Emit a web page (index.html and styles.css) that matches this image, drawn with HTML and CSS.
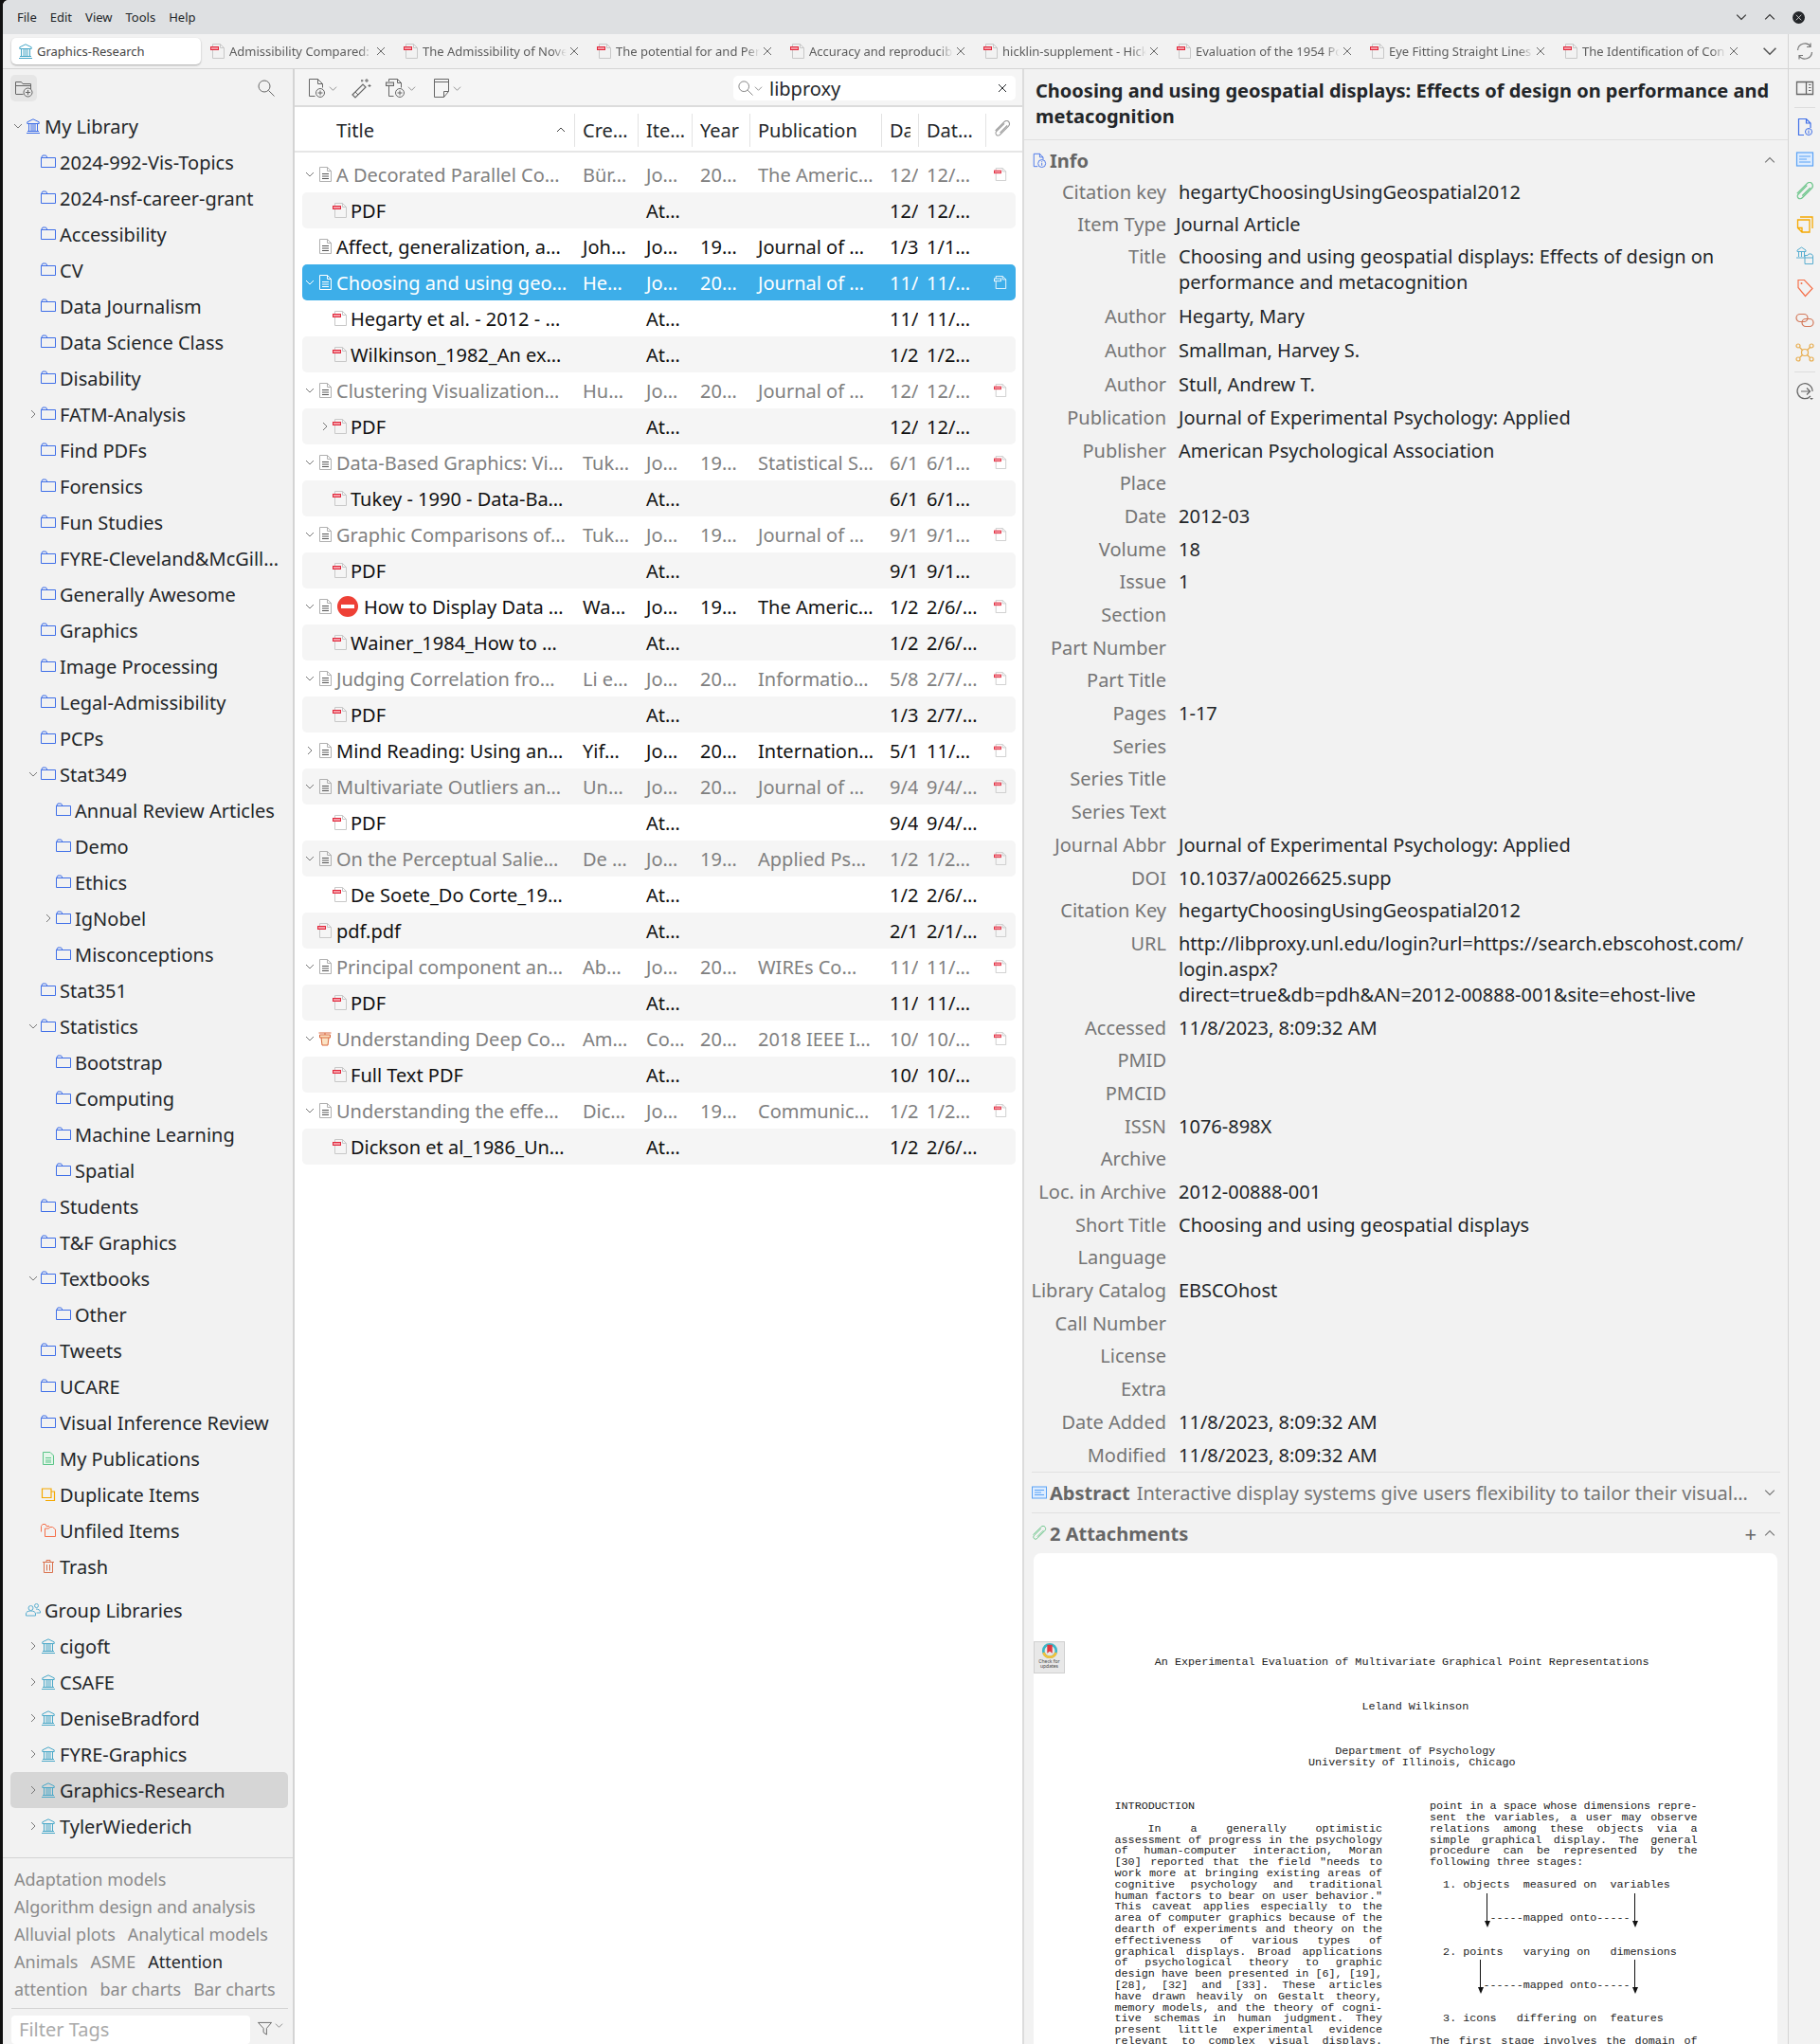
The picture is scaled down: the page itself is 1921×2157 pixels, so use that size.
FILE: index.html
```html
<!DOCTYPE html>
<html lang="en">
<head>
    <meta charset="UTF-8">
    <title>Graphics-Research - Zotero</title>
    <link rel="stylesheet" href="styles.css">
</head>
<body>
<svg class="defs" xmlns="http://www.w3.org/2000/svg">
    <symbol id="i-lib" viewBox="0 0 16 16"><path d="M1 15.500h14M2 13.500h12M2 5.500h12M8 .8 1.800 3.800v1.700h12.400V3.800zM3.500 6v7M6 6v7M8 6v7M10 6v7M12.500 6v7" fill="none" stroke="currentColor"/></symbol>
    <symbol id="i-folder" viewBox="0 0 16 14"><path d="M.5 3.500v10h15v-10H7L5.500 1H2L.5 3.500zM7 3.500H.5" fill="none" stroke="currentColor"/></symbol>
    <symbol id="i-down" viewBox="0 0 10 10"><path d="M1 3l4 4 4-4" fill="none" stroke="currentColor"/></symbol>
    <symbol id="i-right" viewBox="0 0 10 10"><path d="M3 1l4 4-4 4" fill="none" stroke="currentColor"/></symbol>
    <symbol id="i-up" viewBox="0 0 10 10"><path d="M1 7l4-4 4 4" fill="none" stroke="currentColor"/></symbol>
    <symbol id="i-doc" viewBox="0 0 16 16"><path d="M2.500.5h8l4 4v11h-12zM10.500.5v4h4" fill="none" stroke="currentColor"/><path d="M5 7.500h7M5 10h7M5 12.500h7" fill="none" stroke="var(--doc-line,#555)"/></symbol>
    <symbol id="i-pdf" viewBox="0 0 16 16"><path d="M2.500 .5h8l4 4v11h-12zM10.500 .5v4h4" fill="none" stroke="var(--pdf-page,#c8c8c8)"/><rect x=".5" y="3.500" width="8" height="3" fill="var(--pdf-fill,#f49aa4)" stroke="var(--pdf-stroke,#e2283c)"/></symbol>
    <symbol id="i-close" viewBox="0 0 10 10"><path d="M1 1l8 8M9 1l-8 8" fill="none" stroke="currentColor"/></symbol>
    <symbol id="i-search" viewBox="0 0 18 18"><circle cx="7" cy="7" r="6" fill="none" stroke="currentColor"/><path d="M11.500 11.500l6 6" fill="none" stroke="currentColor"/></symbol>
    <symbol id="i-clip" viewBox="1 1 16.500 16.500"><path d="M2.500 11 11 2.500c1.500-1.500 3.500-1.500 4.500 0s.8 3-.5 4.300l-8 8c-1 1-2.500 1.200-3.500.2s-.8-2.500.2-3.500l7.500-7.500M7 13l7-7" fill="none" stroke="currentColor"/></symbol>
</svg>

<div class="window">
    <div class="menubar">
        <nav class="menu"><span>File</span><span>Edit</span><span>View</span><span>Tools</span><span>Help</span></nav>
        <div class="win-buttons">
            <svg class="win-chev"><use href="#i-down"/></svg>
            <svg class="win-chev"><use href="#i-up"/></svg>
            <span class="win-close"><svg><use href="#i-close"/></svg></span>
        </div>
    </div>

    <div class="tabbar">
        <div class="tab-active"><svg class="ico16 teal"><use href="#i-lib"/></svg><span>Graphics-Research</span></div>
        <div class="tab"><svg class="ico16"><use href="#i-pdf"/></svg><span class="tab-name">Admissibility Compared:</span><svg class="tab-x"><use href="#i-close"/></svg></div>
        <div class="tab"><svg class="ico16"><use href="#i-pdf"/></svg><span class="tab-name">The Admissibility of Nove</span><svg class="tab-x"><use href="#i-close"/></svg></div>
        <div class="tab"><svg class="ico16"><use href="#i-pdf"/></svg><span class="tab-name">The potential for and Per</span><svg class="tab-x"><use href="#i-close"/></svg></div>
        <div class="tab"><svg class="ico16"><use href="#i-pdf"/></svg><span class="tab-name">Accuracy and reproducib</span><svg class="tab-x"><use href="#i-close"/></svg></div>
        <div class="tab"><svg class="ico16"><use href="#i-pdf"/></svg><span class="tab-name">hicklin-supplement - Hick</span><svg class="tab-x"><use href="#i-close"/></svg></div>
        <div class="tab"><svg class="ico16"><use href="#i-pdf"/></svg><span class="tab-name">Evaluation of the 1954 Po</span><svg class="tab-x"><use href="#i-close"/></svg></div>
        <div class="tab"><svg class="ico16"><use href="#i-pdf"/></svg><span class="tab-name">Eye Fitting Straight Lines</span><svg class="tab-x"><use href="#i-close"/></svg></div>
        <div class="tab"><svg class="ico16"><use href="#i-pdf"/></svg><span class="tab-name">The Identification of Con</span><svg class="tab-x"><use href="#i-close"/></svg></div>
        <svg class="tabs-more"><use href="#i-down"/></svg>
        <div class="tabbar-sync">
            <svg viewBox="0 0 20 20" width="20" height="20"><path d="M2.500 9A7.500 7.500 0 0 1 16 5M16 1.500V5.500H12M17.500 11A7.500 7.500 0 0 1 4 15M4 18.500V14.500H8" fill="none" stroke="#777" stroke-width="1.200"/></svg>
        </div>
    </div>

    <div class="panes">
        <aside class="sidebar">
            <div class="side-tools">
                <span class="new-coll">
                    <svg viewBox="0 0 20 20" width="20" height="20"><path d="M1.500 16V3.500h6l1.500 2h8.500v6M1.500 7.500h16M1.500 16.500h8" fill="none" stroke="#666"/><circle cx="14.500" cy="14.500" r="4.500" fill="#e6e6e6" stroke="#666"/><path d="M14.500 12v5M12 14.500h5" stroke="#666"/></svg>
                </span>
                <svg class="side-search"><use href="#i-search"/></svg>
            </div>

            <div class="tree">
                <div class="coll lv0"><svg class="twisty"><use href="#i-down"/></svg><svg class="ico16 blue"><use href="#i-lib"/></svg><span>My Library</span></div>
                <div class="coll lv1"><i class="twisty"></i><svg class="ico-f"><use href="#i-folder"/></svg><span>2024-992-Vis-Topics</span></div>
                <div class="coll lv1"><i class="twisty"></i><svg class="ico-f"><use href="#i-folder"/></svg><span>2024-nsf-career-grant</span></div>
                <div class="coll lv1"><i class="twisty"></i><svg class="ico-f"><use href="#i-folder"/></svg><span>Accessibility</span></div>
                <div class="coll lv1"><i class="twisty"></i><svg class="ico-f"><use href="#i-folder"/></svg><span>CV</span></div>
                <div class="coll lv1"><i class="twisty"></i><svg class="ico-f"><use href="#i-folder"/></svg><span>Data Journalism</span></div>
                <div class="coll lv1"><i class="twisty"></i><svg class="ico-f"><use href="#i-folder"/></svg><span>Data Science Class</span></div>
                <div class="coll lv1"><i class="twisty"></i><svg class="ico-f"><use href="#i-folder"/></svg><span>Disability</span></div>
                <div class="coll lv1"><svg class="twisty"><use href="#i-right"/></svg><svg class="ico-f"><use href="#i-folder"/></svg><span>FATM-Analysis</span></div>
                <div class="coll lv1"><i class="twisty"></i><svg class="ico-f"><use href="#i-folder"/></svg><span>Find PDFs</span></div>
                <div class="coll lv1"><i class="twisty"></i><svg class="ico-f"><use href="#i-folder"/></svg><span>Forensics</span></div>
                <div class="coll lv1"><i class="twisty"></i><svg class="ico-f"><use href="#i-folder"/></svg><span>Fun Studies</span></div>
                <div class="coll lv1"><i class="twisty"></i><svg class="ico-f"><use href="#i-folder"/></svg><span>FYRE-Cleveland&amp;McGill…</span></div>
                <div class="coll lv1"><i class="twisty"></i><svg class="ico-f"><use href="#i-folder"/></svg><span>Generally Awesome</span></div>
                <div class="coll lv1"><i class="twisty"></i><svg class="ico-f"><use href="#i-folder"/></svg><span>Graphics</span></div>
                <div class="coll lv1"><i class="twisty"></i><svg class="ico-f"><use href="#i-folder"/></svg><span>Image Processing</span></div>
                <div class="coll lv1"><i class="twisty"></i><svg class="ico-f"><use href="#i-folder"/></svg><span>Legal-Admissibility</span></div>
                <div class="coll lv1"><i class="twisty"></i><svg class="ico-f"><use href="#i-folder"/></svg><span>PCPs</span></div>
                <div class="coll lv1"><svg class="twisty"><use href="#i-down"/></svg><svg class="ico-f"><use href="#i-folder"/></svg><span>Stat349</span></div>
                <div class="coll lv2"><i class="twisty"></i><svg class="ico-f"><use href="#i-folder"/></svg><span>Annual Review Articles</span></div>
                <div class="coll lv2"><i class="twisty"></i><svg class="ico-f"><use href="#i-folder"/></svg><span>Demo</span></div>
                <div class="coll lv2"><i class="twisty"></i><svg class="ico-f"><use href="#i-folder"/></svg><span>Ethics</span></div>
                <div class="coll lv2"><svg class="twisty"><use href="#i-right"/></svg><svg class="ico-f"><use href="#i-folder"/></svg><span>IgNobel</span></div>
                <div class="coll lv2"><i class="twisty"></i><svg class="ico-f"><use href="#i-folder"/></svg><span>Misconceptions</span></div>
                <div class="coll lv1"><i class="twisty"></i><svg class="ico-f"><use href="#i-folder"/></svg><span>Stat351</span></div>
                <div class="coll lv1"><svg class="twisty"><use href="#i-down"/></svg><svg class="ico-f"><use href="#i-folder"/></svg><span>Statistics</span></div>
                <div class="coll lv2"><i class="twisty"></i><svg class="ico-f"><use href="#i-folder"/></svg><span>Bootstrap</span></div>
                <div class="coll lv2"><i class="twisty"></i><svg class="ico-f"><use href="#i-folder"/></svg><span>Computing</span></div>
                <div class="coll lv2"><i class="twisty"></i><svg class="ico-f"><use href="#i-folder"/></svg><span>Machine Learning</span></div>
                <div class="coll lv2"><i class="twisty"></i><svg class="ico-f"><use href="#i-folder"/></svg><span>Spatial</span></div>
                <div class="coll lv1"><i class="twisty"></i><svg class="ico-f"><use href="#i-folder"/></svg><span>Students</span></div>
                <div class="coll lv1"><i class="twisty"></i><svg class="ico-f"><use href="#i-folder"/></svg><span>T&amp;F Graphics</span></div>
                <div class="coll lv1"><svg class="twisty"><use href="#i-down"/></svg><svg class="ico-f"><use href="#i-folder"/></svg><span>Textbooks</span></div>
                <div class="coll lv2"><i class="twisty"></i><svg class="ico-f"><use href="#i-folder"/></svg><span>Other</span></div>
                <div class="coll lv1"><i class="twisty"></i><svg class="ico-f"><use href="#i-folder"/></svg><span>Tweets</span></div>
                <div class="coll lv1"><i class="twisty"></i><svg class="ico-f"><use href="#i-folder"/></svg><span>UCARE</span></div>
                <div class="coll lv1"><i class="twisty"></i><svg class="ico-f"><use href="#i-folder"/></svg><span>Visual Inference Review</span></div>
                <div class="coll lv1"><i class="twisty"></i>
                    <svg class="ico16" viewBox="0 0 16 16"><path d="M2.500 1.500h7.500l3.500 3.500v9.500h-11z" fill="#e4f6ea" stroke="#59c487"/><path d="M5 7.500h6M5 10h6M5 12h6" stroke="#59c487"/></svg>
                    <span>My Publications</span></div>
                <div class="coll lv1"><i class="twisty"></i>
                    <svg class="ico16" viewBox="0 0 16 16"><path d="M1.500 2h9.500v9.500H1.500zM5 14.500h9.500V5h-3.500" fill="none" stroke="#f5a800" stroke-width="1.200"/></svg>
                    <span>Duplicate Items</span></div>
                <div class="coll lv1"><i class="twisty"></i>
                    <svg class="ico16" viewBox="0 0 16 16"><path d="M.5 9.500V3.500L2 1.500h3l1 2h3M4.500 14.500V6h4l1-1.500h3L15.500 7v7.500z" fill="none" stroke="#f5704a"/></svg>
                    <span>Unfiled Items</span></div>
                <div class="coll lv1"><i class="twisty"></i>
                    <svg class="ico16" viewBox="0 0 16 16"><path d="M2 3.500h12M6 3V1.500h4V3M3.500 4v10.500h9V4M6.500 6v6.500M9.500 6v6.500" fill="none" stroke="#d9714d"/></svg>
                    <span>Trash</span></div>

                <div class="coll lv0 group-head"><i class="twisty"></i>
                    <svg class="ico16" viewBox="0 0 16 16"><circle cx="5.500" cy="6" r="2.500" fill="none" stroke="#5aaed0"/><circle cx="11.500" cy="3.500" r="2" fill="none" stroke="#5aaed0"/><path d="M.5 14v-2c0-2 2-3 5-3s5 1 5 3v2zM11 7c2 0 4.500 1 4.500 3v1h-4" fill="none" stroke="#5aaed0"/></svg>
                    <span>Group Libraries</span></div>
                <div class="coll lv1"><svg class="twisty"><use href="#i-right"/></svg><svg class="ico16 teal"><use href="#i-lib"/></svg><span>cigoft</span></div>
                <div class="coll lv1"><svg class="twisty"><use href="#i-right"/></svg><svg class="ico16 teal"><use href="#i-lib"/></svg><span>CSAFE</span></div>
                <div class="coll lv1"><svg class="twisty"><use href="#i-right"/></svg><svg class="ico16 teal"><use href="#i-lib"/></svg><span>DeniseBradford</span></div>
                <div class="coll lv1"><svg class="twisty"><use href="#i-right"/></svg><svg class="ico16 teal"><use href="#i-lib"/></svg><span>FYRE-Graphics</span></div>
                <div class="coll lv1 coll-selected"><svg class="twisty"><use href="#i-right"/></svg><svg class="ico16 teal"><use href="#i-lib"/></svg><span>Graphics-Research</span></div>
                <div class="coll lv1"><svg class="twisty"><use href="#i-right"/></svg><svg class="ico16 teal"><use href="#i-lib"/></svg><span>TylerWiederich</span></div>
            </div>

            <div class="tags">
                <div class="tag-list">
                    <div class="tag-line"><span>Adaptation models</span></div>
                    <div class="tag-line"><span>Algorithm design and analysis</span></div>
                    <div class="tag-line"><span>Alluvial plots</span><span>Analytical models</span></div>
                    <div class="tag-line"><span>Animals</span><span>ASME</span><span class="tag-on">Attention</span></div>
                    <div class="tag-line"><span>attention</span><span>bar charts</span><span>Bar charts</span></div>
                    <div class="tag-line"><span>Barplots</span><span>Base Plots</span></div>
                </div>
                <div class="tag-filter">
                    <span class="tag-input">Filter Tags</span>
                    <svg viewBox="0 0 16 16" width="15" height="15"><path d="M.5 1.500h15L10 8v7L6.500 12.500V8z" fill="none" stroke="#666"/></svg>
                    <svg class="chev-s"><use href="#i-down"/></svg>
                </div>
            </div>
        </aside>

        <main class="items">
            <div class="items-tools">
                <svg class="tool" viewBox="0 0 22 22"><path d="M2.500 19.500V1.500h9l5 5v4M11.500 1.500v5h5M2.500 19.500h6" fill="none" stroke="#666"/><circle cx="14" cy="16" r="4.500" fill="none" stroke="#666"/><path d="M14 13.500v5M11.500 16h5" stroke="#666"/></svg>
                <svg class="chev-s"><use href="#i-down"/></svg>
                <svg class="tool wand" viewBox="0 0 22 22"><path d="M2 18l11-11 3 3L5 21z" fill="none" stroke="#666" stroke-width="1.200"/><path d="M5 15l3 3" stroke="#666"/><path d="M17 1v4M15 3h4M20 7v3M18.500 8.500h3M12 2v2.500M11 3h2.500" stroke="#666"/></svg>
                <svg class="tool" viewBox="0 0 22 22"><path d="M3.500 4V1.500h9l4 4v5M12.500 1.500v4h4M3.500 9v10.500h5" fill="none" stroke="#666"/><rect x=".5" y="5" width="8" height="3.500" fill="#ddd" stroke="#666"/><circle cx="15" cy="16" r="4.500" fill="none" stroke="#666"/><path d="M15 13.500v5M12.500 16h5" stroke="#666"/></svg>
                <svg class="chev-s"><use href="#i-down"/></svg>
                <svg class="tool note" viewBox="0 0 22 22"><path d="M3.500 1.500h15v13l-5 6h-10zM18.500 14.500h-5v6M3.500 4.500h15" fill="none" stroke="#666"/></svg>
                <svg class="chev-s"><use href="#i-down"/></svg>
                <div class="search-box">
                    <svg class="search-mag"><use href="#i-search"/></svg>
                    <svg class="chev-s"><use href="#i-down"/></svg>
                    <span class="search-text">libproxy</span>
                    <svg class="search-x"><use href="#i-close"/></svg>
                </div>
            </div>

            <div class="col-head">
                <div class="c-title">Title<svg class="sort"><use href="#i-up"/></svg></div>
                <div>Cre…</div><div>Ite…</div><div>Year</div><div>Publication</div><div><span class="da-head">Da</span></div><div>Dat…</div>
                <div class="c-clip"><svg><use href="#i-clip"/></svg></div>
            </div>

            <div class="rows">
                <div class="row dim"><div class="c-name"><svg class="twisty"><use href="#i-down"/></svg><svg class="ico16 doc"><use href="#i-doc"/></svg><b>A Decorated Parallel Co…</b></div><span>Bür…</span><span>Jo…</span><span>20…</span><span>The Americ…</span><span>12/</span><span>12/…</span><span class="c-att"><svg><use href="#i-pdf"/></svg></span></div>
                <div class="row"><div class="c-name child"><i class="twisty"></i><svg class="ico16"><use href="#i-pdf"/></svg><b>PDF</b></div><span></span><span>At…</span><span></span><span></span><span>12/</span><span>12/…</span></div>
                <div class="row"><div class="c-name"><i class="twisty"></i><svg class="ico16 doc"><use href="#i-doc"/></svg><b>Affect, generalization, a…</b></div><span>Joh…</span><span>Jo…</span><span>19…</span><span>Journal of …</span><span>1/3</span><span>1/1…</span></div>
                <div class="row selected"><div class="c-name"><svg class="twisty"><use href="#i-down"/></svg><svg class="ico16 doc"><use href="#i-doc"/></svg><b>Choosing and using geo…</b></div><span>He…</span><span>Jo…</span><span>20…</span><span>Journal of …</span><span>11/</span><span>11/…</span><span class="c-att"><svg><use href="#i-pdf"/></svg></span></div>
                <div class="row"><div class="c-name child"><i class="twisty"></i><svg class="ico16"><use href="#i-pdf"/></svg><b>Hegarty et al. - 2012 - …</b></div><span></span><span>At…</span><span></span><span></span><span>11/</span><span>11/…</span></div>
                <div class="row"><div class="c-name child"><i class="twisty"></i><svg class="ico16"><use href="#i-pdf"/></svg><b>Wilkinson_1982_An ex…</b></div><span></span><span>At…</span><span></span><span></span><span>1/2</span><span>1/2…</span></div>
                <div class="row dim"><div class="c-name"><svg class="twisty"><use href="#i-down"/></svg><svg class="ico16 doc"><use href="#i-doc"/></svg><b>Clustering Visualization…</b></div><span>Hu…</span><span>Jo…</span><span>20…</span><span>Journal of …</span><span>12/</span><span>12/…</span><span class="c-att"><svg><use href="#i-pdf"/></svg></span></div>
                <div class="row"><div class="c-name child"><svg class="twisty"><use href="#i-right"/></svg><svg class="ico16"><use href="#i-pdf"/></svg><b>PDF</b></div><span></span><span>At…</span><span></span><span></span><span>12/</span><span>12/…</span></div>
                <div class="row dim"><div class="c-name"><svg class="twisty"><use href="#i-down"/></svg><svg class="ico16 doc"><use href="#i-doc"/></svg><b>Data-Based Graphics: Vi…</b></div><span>Tuk…</span><span>Jo…</span><span>19…</span><span>Statistical S…</span><span>6/1</span><span>6/1…</span><span class="c-att"><svg><use href="#i-pdf"/></svg></span></div>
                <div class="row"><div class="c-name child"><i class="twisty"></i><svg class="ico16"><use href="#i-pdf"/></svg><b>Tukey - 1990 - Data-Ba…</b></div><span></span><span>At…</span><span></span><span></span><span>6/1</span><span>6/1…</span></div>
                <div class="row dim"><div class="c-name"><svg class="twisty"><use href="#i-down"/></svg><svg class="ico16 doc"><use href="#i-doc"/></svg><b>Graphic Comparisons of…</b></div><span>Tuk…</span><span>Jo…</span><span>19…</span><span>Journal of …</span><span>9/1</span><span>9/1…</span><span class="c-att"><svg><use href="#i-pdf"/></svg></span></div>
                <div class="row"><div class="c-name child"><i class="twisty"></i><svg class="ico16"><use href="#i-pdf"/></svg><b>PDF</b></div><span></span><span>At…</span><span></span><span></span><span>9/1</span><span>9/1…</span></div>
                <div class="row"><div class="c-name"><svg class="twisty"><use href="#i-down"/></svg><svg class="ico16 doc"><use href="#i-doc"/></svg><svg class="stop" viewBox="0 0 22 22"><circle cx="11" cy="11" r="11" fill="#ee4036"/><rect x="4" y="9" width="14" height="4" fill="#fff"/></svg><b>How to Display Data …</b></div><span>Wa…</span><span>Jo…</span><span>19…</span><span>The Americ…</span><span>1/2</span><span>2/6/…</span><span class="c-att"><svg><use href="#i-pdf"/></svg></span></div>
                <div class="row"><div class="c-name child"><i class="twisty"></i><svg class="ico16"><use href="#i-pdf"/></svg><b>Wainer_1984_How to …</b></div><span></span><span>At…</span><span></span><span></span><span>1/2</span><span>2/6/…</span></div>
                <div class="row dim"><div class="c-name"><svg class="twisty"><use href="#i-down"/></svg><svg class="ico16 doc"><use href="#i-doc"/></svg><b>Judging Correlation fro…</b></div><span>Li e…</span><span>Jo…</span><span>20…</span><span>Informatio…</span><span>5/8</span><span>2/7/…</span><span class="c-att"><svg><use href="#i-pdf"/></svg></span></div>
                <div class="row"><div class="c-name child"><i class="twisty"></i><svg class="ico16"><use href="#i-pdf"/></svg><b>PDF</b></div><span></span><span>At…</span><span></span><span></span><span>1/3</span><span>2/7/…</span></div>
                <div class="row"><div class="c-name"><svg class="twisty"><use href="#i-right"/></svg><svg class="ico16 doc"><use href="#i-doc"/></svg><b>Mind Reading: Using an…</b></div><span>Yif…</span><span>Jo…</span><span>20…</span><span>Internation…</span><span>5/1</span><span>11/…</span><span class="c-att"><svg><use href="#i-pdf"/></svg></span></div>
                <div class="row dim"><div class="c-name"><svg class="twisty"><use href="#i-down"/></svg><svg class="ico16 doc"><use href="#i-doc"/></svg><b>Multivariate Outliers an…</b></div><span>Un…</span><span>Jo…</span><span>20…</span><span>Journal of …</span><span>9/4</span><span>9/4/…</span><span class="c-att"><svg><use href="#i-pdf"/></svg></span></div>
                <div class="row"><div class="c-name child"><i class="twisty"></i><svg class="ico16"><use href="#i-pdf"/></svg><b>PDF</b></div><span></span><span>At…</span><span></span><span></span><span>9/4</span><span>9/4/…</span></div>
                <div class="row dim"><div class="c-name"><svg class="twisty"><use href="#i-down"/></svg><svg class="ico16 doc"><use href="#i-doc"/></svg><b>On the Perceptual Salie…</b></div><span>De …</span><span>Jo…</span><span>19…</span><span>Applied Ps…</span><span>1/2</span><span>1/2…</span><span class="c-att"><svg><use href="#i-pdf"/></svg></span></div>
                <div class="row"><div class="c-name child"><i class="twisty"></i><svg class="ico16"><use href="#i-pdf"/></svg><b>De Soete_Do Corte_19…</b></div><span></span><span>At…</span><span></span><span></span><span>1/2</span><span>2/6/…</span></div>
                <div class="row"><div class="c-name"><i class="twisty"></i><svg class="ico16"><use href="#i-pdf"/></svg><b>pdf.pdf</b></div><span></span><span>At…</span><span></span><span></span><span>2/1</span><span>2/1/…</span><span class="c-att"><svg><use href="#i-pdf"/></svg></span></div>
                <div class="row dim"><div class="c-name"><svg class="twisty"><use href="#i-down"/></svg><svg class="ico16 doc"><use href="#i-doc"/></svg><b>Principal component an…</b></div><span>Ab…</span><span>Jo…</span><span>20…</span><span>WIREs Co…</span><span>11/</span><span>11/…</span><span class="c-att"><svg><use href="#i-pdf"/></svg></span></div>
                <div class="row"><div class="c-name child"><i class="twisty"></i><svg class="ico16"><use href="#i-pdf"/></svg><b>PDF</b></div><span></span><span>At…</span><span></span><span></span><span>11/</span><span>11/…</span></div>
                <div class="row dim"><div class="c-name"><svg class="twisty"><use href="#i-down"/></svg><svg class="ico16" viewBox="0 0 16 16"><path d="M1.500 2h13M8 2v2M2.500 4h11v3h-11zM4 7l1 8h6l1-8" fill="#fbe3c4" stroke="#d9663a"/></svg><b>Understanding Deep Co…</b></div><span>Am…</span><span>Co…</span><span>20…</span><span>2018 IEEE I…</span><span>10/</span><span>10/…</span><span class="c-att"><svg><use href="#i-pdf"/></svg></span></div>
                <div class="row"><div class="c-name child"><i class="twisty"></i><svg class="ico16"><use href="#i-pdf"/></svg><b>Full Text PDF</b></div><span></span><span>At…</span><span></span><span></span><span>10/</span><span>10/…</span></div>
                <div class="row dim"><div class="c-name"><svg class="twisty"><use href="#i-down"/></svg><svg class="ico16 doc"><use href="#i-doc"/></svg><b>Understanding the effe…</b></div><span>Dic…</span><span>Jo…</span><span>19…</span><span>Communic…</span><span>1/2</span><span>1/2…</span><span class="c-att"><svg><use href="#i-pdf"/></svg></span></div>
                <div class="row"><div class="c-name child"><i class="twisty"></i><svg class="ico16"><use href="#i-pdf"/></svg><b>Dickson et al_1986_Un…</b></div><span></span><span>At…</span><span></span><span></span><span>1/2</span><span>2/6/…</span></div>
            </div>
        </main>

        <section class="details">
            <h1 class="item-title">Choosing and using geospatial displays: Effects of design on performance and metacognition</h1>

            <div class="sec-head info-head">
                <svg class="sec-ico" viewBox="0 0 16 18"><path d="M6 16.500H1.500V1.500h7l4 4v3M8.500 1.500v4h4" fill="none" stroke="#3f6fe8"/><circle cx="11" cy="13" r="4.500" fill="#f2f2f2" stroke="#3f6fe8"/><path d="M11 12v3.500M11 10v1" stroke="#3f6fe8"/></svg>
                <strong>Info</strong>
                <svg class="sec-chev"><use href="#i-up"/></svg>
            </div>

            <div class="fields">
                <label>Citation key</label><div>hegartyChoosingUsingGeospatial2012</div>
                <label>Item Type</label><div class="type-val">Journal Article</div>
                <label>Title</label><div>Choosing and using geospatial displays: Effects of design on<br>performance and metacognition</div>
                <label class="creator">Author</label><div class="creator">Hegarty, Mary</div>
                <label class="creator">Author</label><div class="creator">Smallman, Harvey S.</div>
                <label class="creator">Author</label><div class="creator">Stull, Andrew T.</div>
                <label>Publication</label><div>Journal of Experimental Psychology: Applied</div>
                <label>Publisher</label><div>American Psychological Association</div>
                <label>Place</label><div></div>
                <label>Date</label><div>2012-03</div>
                <label>Volume</label><div>18</div>
                <label>Issue</label><div>1</div>
                <label>Section</label><div></div>
                <label>Part Number</label><div></div>
                <label>Part Title</label><div></div>
                <label>Pages</label><div>1-17</div>
                <label>Series</label><div></div>
                <label>Series Title</label><div></div>
                <label>Series Text</label><div></div>
                <label>Journal Abbr</label><div>Journal of Experimental Psychology: Applied</div>
                <label>DOI</label><div>10.1037/a0026625.supp</div>
                <label>Citation Key</label><div>hegartyChoosingUsingGeospatial2012</div>
                <label>URL</label><div>http://libproxy.unl.edu/login?url=https://search.ebscohost.com/<br>login.aspx?<br>direct=true&amp;db=pdh&amp;AN=2012-00888-001&amp;site=ehost-live</div>
                <label>Accessed</label><div>11/8/2023, 8:09:32 AM</div>
                <label>PMID</label><div></div>
                <label>PMCID</label><div></div>
                <label>ISSN</label><div>1076-898X</div>
                <label>Archive</label><div></div>
                <label>Loc. in Archive</label><div>2012-00888-001</div>
                <label>Short Title</label><div>Choosing and using geospatial displays</div>
                <label>Language</label><div></div>
                <label>Library Catalog</label><div>EBSCOhost</div>
                <label>Call Number</label><div></div>
                <label>License</label><div></div>
                <label>Extra</label><div></div>
                <label>Date Added</label><div>11/8/2023, 8:09:32 AM</div>
                <label>Modified</label><div>11/8/2023, 8:09:32 AM</div>
            </div>

            <div class="sec-head abstract-head">
                <svg class="sec-ico" viewBox="0 0 16 14"><rect x=".5" y="1" width="15" height="12" fill="#dcecff" stroke="#5aa2f5"/><path d="M3 4.500h10M3 7h7M3 9.500h10" stroke="#5aa2f5"/></svg>
                <strong>Abstract</strong>
                <span class="abstract-text">Interactive display systems give users flexibility to tailor their visual…</span>
                <svg class="sec-chev"><use href="#i-down"/></svg>
            </div>

            <div class="sec-head attach-head">
                <svg class="sec-ico"><use href="#i-clip"/></svg>
                <strong>2 Attachments</strong>
                <span class="attach-add">+</span>
                <svg class="sec-chev"><use href="#i-up"/></svg>
            </div>

            <div class="preview">
                <div class="crossmark">
                    <svg viewBox="0 0 20 20" width="18" height="18"><circle cx="10" cy="10" r="7.500" fill="none" stroke="#3cb6c8" stroke-width="3"/><path d="M2.800 12a7.500 7.500 0 0 0 14.400 0" fill="none" stroke="#f3c13a" stroke-width="3"/><path d="M7 3h6v10l-3-2.500L7 13z" fill="#e2343c"/></svg>
                    <span>Check for updates</span>
                </div>
                <pre class="pdf-head">      An Experimental Evaluation of Multivariate Graphical Point Representations



                                     Leland Wilkinson



                                 Department of Psychology
                             University of Illinois, Chicago



</pre>
                <div class="pdf-cols">
                    <div class="pdf-col">
                        <p class="plain">INTRODUCTION</p>
                        <p class="plain">&nbsp;</p>
                        <p class="indent">In a generally optimistic</p>
                        <p>assessment of progress in the psychology</p>
                        <p>of human-computer interaction, Moran</p>
                        <p>[30] reported that the field "needs to</p>
                        <p>work more at bringing existing areas of</p>
                        <p>cognitive psychology and traditional</p>
                        <p>human factors to bear on user behavior."</p>
                        <p>This caveat applies especially to the</p>
                        <p>area of computer graphics because of the</p>
                        <p>dearth of experiments and theory on the</p>
                        <p>effectiveness of various types of</p>
                        <p>graphical displays. Broad applications</p>
                        <p>of psychological theory to graphic</p>
                        <p>design have been presented in [6], [19],</p>
                        <p>[28], [32] and [33]. These articles</p>
                        <p>have drawn heavily on Gestalt theory,</p>
                        <p>memory models, and the theory of cogni-</p>
                        <p>tive schemas in human judgment. They</p>
                        <p>present little experimental evidence</p>
                        <p>relevant to complex visual displays.</p>
                    </div>
                    <div class="pdf-col">
                        <p>point in a space whose dimensions repre-</p>
                        <p>sent the variables, a user may observe</p>
                        <p>relations among these objects via a</p>
                        <p>simple graphical display. The general</p>
                        <p>procedure can be represented by the</p>
                        <p class="plain">following three stages:</p>
                        <p class="plain">&nbsp;</p>
                        <pre>  1. objects  measured on  variables</pre>
                        <div class="mapped">
                            <i class="arrow a1"></i><i class="arrow a3"></i>
                            <pre>


         -----mapped onto-----


</pre>
                        </div>
                        <pre>  2. points   varying on   dimensions</pre>
                        <div class="mapped">
                            <i class="arrow a2"></i><i class="arrow a3"></i>
                            <pre>


        ------mapped onto-----


</pre>
                        </div>
                        <pre>  3. icons   differing on  features</pre>
                        <p class="plain">&nbsp;</p>
                        <p>The first stage involves the domain of</p>
                    </div>
                </div>
            </div>
        </section>

        <nav class="side-tabs">
            <svg class="st" viewBox="0 0 20 20"><path d="M1.500 3.500h17v13h-17zM11.500 3.500v13" fill="none" stroke="#666" stroke-width="1.300"/><path d="M14 6.500h2.500M14 9.500h2.500M14 12.500h2.500" stroke="#666"/></svg>
            <hr>
            <svg class="st" viewBox="0 0 20 20"><path d="M9 18.500H3.500V1.500h8l4.500 4.500v5M11.500 1.500V6H16" fill="none" stroke="#3f6fe8" stroke-width="1.200"/><circle cx="14" cy="15" r="3.500" fill="#f2f2f2" stroke="#3f6fe8"/><path d="M14 14v3M14 12.500v1" stroke="#3f6fe8"/></svg>
            <svg class="st" viewBox="0 0 20 20"><rect x="1.500" y="3" width="17" height="14" fill="#dcecff" stroke="#5aa2f5" stroke-width="1.200"/><path d="M4 7h12M4 10h8M4 13h12" stroke="#5aa2f5"/></svg>
            <svg class="st green"><use href="#i-clip"/></svg>
            <svg class="st" viewBox="0 0 20 20"><path d="M5 3h13v12M2.500 6h12.500v13H7l-4.500-4.500zM2.500 14.500H7V19" fill="none" stroke="#f5a800" stroke-width="1.300"/></svg>
            <svg class="st" viewBox="0 0 20 20"><path d="M1 12h9M2 5.500h9M6.500 1 2 4v1.500h9V4zM3.500 6v5M6.500 6v5M9.500 6v5" fill="none" stroke="#5aaed0"/><path d="M10 18.500v-9h3l1-1.500h3l1.500 2v8.500zM10 12h9" fill="none" stroke="#5aaed0"/></svg>
            <svg class="st" viewBox="0 0 20 20"><path d="M3 1.500h6.500l8.500 9-7.500 8L3 9.500z" fill="none" stroke="#f5704a" stroke-width="1.200"/><circle cx="6.500" cy="5" r="1" fill="#f5704a"/></svg>
            <svg class="st" viewBox="0 0 20 20"><g fill="none" stroke="#d4795a" stroke-width="1.200"><rect x="1" y="3.500" width="12" height="8" rx="4"/><rect x="7" y="8.500" width="12" height="8" rx="4"/></g></svg>
            <svg class="st" viewBox="0 0 20 20"><g fill="none" stroke="#e8ad4f" stroke-width="1.200"><circle cx="10" cy="10" r="3.500"/><circle cx="3" cy="3" r="2"/><circle cx="17" cy="3" r="2"/><circle cx="3" cy="17" r="2"/><circle cx="17" cy="17" r="2"/><path d="M4.500 4.500l3 3M15.500 4.500l-3 3M4.500 15.500l3-3M15.500 15.500l-3-3"/></g></svg>
            <hr>
            <svg class="st" viewBox="0 0 20 20"><path d="M16 15A8 8 0 1 1 18 10M6 10h9M12 6.500l3.500 3.500-3.500 3.500" fill="none" stroke="#666" stroke-width="1.200"/><path d="M15 17h4l-2 2z" fill="#666"/></svg>
        </nav>
    </div>
</div>
</body>
</html>
```

FILE: styles.css
```css
* { box-sizing: border-box; }

html, body {
    height: 100%;
    margin: 0;
    overflow: hidden;
    background-color: #111;
    font-family: "Noto Sans", sans-serif;
    font-size: 20px;
    color: #232629;
}

.defs { display: none; }

.window {
    margin-left: 3px;
    height: 2157px;
    display: flex;
    flex-direction: column;
    background-color: #f2f2f2;
    border-top-left-radius: 6px;
    overflow: hidden;
}

/* top bars */
.menubar {
    height: 36px;
    flex: none;
    display: flex;
    justify-content: space-between;
    align-items: center;
    background-color: #dee0e2;
    padding: 0 16px 0 15px;
    font-size: 13px;
}
.menu { display: flex; gap: 14px; }
.win-buttons { display: flex; align-items: center; gap: 18px; }
.win-chev { width: 12px; height: 12px; color: #333; }
.win-close {
    width: 13px;
    height: 13px;
    border-radius: 50%;
    background-color: #232629;
    color: #fff;
    display: flex;
    align-items: center;
    justify-content: center;
}
.win-close svg { width: 7px; height: 7px; }

.tabbar {
    height: 37px;
    flex: none;
    display: flex;
    align-items: center;
    border-bottom: 1px solid #d4d4d4;
    padding-left: 9px;
    font-size: 13px;
    color: #5c5c5c;
}
.tab-active {
    width: 200px;
    height: 28px;
    margin-right: 6px;
    display: flex;
    align-items: center;
    gap: 4px;
    padding-left: 7px;
    background-color: #fff;
    border-radius: 5px;
    box-shadow: 0 1px 2px rgba(0,0,0,0.3);
    color: #444;
}
.tab {
    width: 204px;
    flex: none;
    display: flex;
    align-items: center;
    gap: 4px;
    padding-left: 4px;
}
.tab-name {
    width: 152px;
    overflow: hidden;
    white-space: nowrap;
    -webkit-mask-image: linear-gradient(to right, #000 90%, transparent);
    mask-image: linear-gradient(to right, #000 90%, transparent);
}
.tab-x { width: 10px; height: 10px; margin-left: -1px; color: #666; }
.tabs-more { width: 16px; height: 16px; margin-left: 10px; color: #555; flex: none; }
.tabbar-sync {
    margin-left: auto;
    width: 34px;
    height: 36px;
    flex: none;
    display: flex;
    align-items: center;
    justify-content: center;
    border-left: 1px solid #d4d4d4;
}

.panes { flex: 1; display: flex; min-height: 0; }

/* left column */
.sidebar {
    width: 308px;
    flex: none;
    display: flex;
    flex-direction: column;
    border-right: 2px solid #d4d4d4;
}
.side-tools {
    height: 40px;
    flex: none;
    display: flex;
    justify-content: space-between;
    align-items: center;
    padding: 0 19px 0 8px;
}
.new-coll {
    width: 28px;
    height: 28px;
    border-radius: 5px;
    background-color: #e6e6e6;
    display: flex;
    align-items: center;
    justify-content: center;
}
.side-search { width: 18px; height: 18px; color: #666; }

.tree { flex: 1; padding: 1px 5px 0 8px; }
.coll {
    height: 38px;
    display: flex;
    align-items: center;
    border-radius: 5px;
    white-space: nowrap;
}
.coll > span { margin-left: 4px; }
.coll.lv0 { padding-left: 0; }
.coll.lv1 { padding-left: 16px; }
.coll.lv2 { padding-left: 32px; }
.group-head { margin-top: 8px; }
.coll-selected { background-color: #d6d6d6; }

.twisty {
    width: 16px;
    height: 10px;
    flex: none;
    color: #777;
    display: block;
}
.ico16 { width: 16px; height: 16px; flex: none; display: block; }
.ico-f { width: 16px; height: 14px; flex: none; color: #3f6fe8; margin-bottom: 2px; }
.blue { color: #3f6fe8; }
.teal { color: #4aa8c8; }

.tags {
    height: 197px;
    flex: none;
    border-top: 1px solid #d4d4d4;
    display: flex;
    flex-direction: column;
}
.tag-list {
    height: 162px;
    overflow: hidden;
    padding: 8px 12px 0;
    font-size: 18px;
    line-height: 29px;
    color: #8a8a8a;
}
.tag-line { display: flex; gap: 13px; white-space: nowrap; }
.tag-on { color: #232629; }
.tag-filter {
    margin: 0 5px 0 9px;
    flex: 1;
    display: flex;
    align-items: flex-start;
    border-top: 1px solid #d4d4d4;
    padding-top: 7px;
    gap: 2px;
}
.tag-input {
    width: 252px;
    height: 30px;
    margin-right: 6px;
    background-color: #fff;
    border-radius: 4px;
    padding-left: 8px;
    line-height: 29px;
    color: #aaa;
    flex: none;
}
.tag-filter svg { margin-top: 6px; }

/* middle column */
.items {
    width: 768px;
    flex: none;
    display: flex;
    flex-direction: column;
    background-color: #fff;
}
.items-tools {
    height: 40px;
    flex: none;
    display: flex;
    align-items: center;
    background-color: #f5f5f5;
    border-bottom: 2px solid #dcdcdc;
    padding: 2px 0 0 13px;
}
.tool { width: 22px; height: 22px; flex: none; }
.wand { margin-left: 14px; margin-right: 15px; }
.note { margin-left: 16px; }
.chev-s { width: 9px; height: 9px; color: #888; flex: none; margin-left: 1px; }
.search-box {
    margin-left: auto;
    margin-right: 7px;
    width: 298px;
    height: 26px;
    display: flex;
    align-items: center;
    background-color: #fff;
    border-radius: 5px;
    padding-left: 5px;
}
.search-mag { width: 16px; height: 16px; color: #777; flex: none; }
.search-text { margin-left: 7px; flex: 1; }
.search-x { width: 10px; height: 10px; color: #232629; margin-right: 9px; }

.col-head, .row {
    display: grid;
    grid-template-columns: 287px 67px 57px 61px 139px 39px 71px 32px;
    margin: 0 7px 0 8px;
}
.col-head {
    height: 48px;
    flex: none;
    align-items: center;
    margin: 0;
    padding: 2px 7px 0 8px;
    border-bottom: 2px solid #e6e6e6;
}
.col-head > div {
    height: 35px;
    line-height: 35px;
    padding-left: 8px;
    border-left: 1px solid #e3e3e3;
    overflow: hidden;
    white-space: nowrap;
}
.col-head > .c-title {
    border-left: none;
    padding-left: 36px;
    display: flex;
    justify-content: space-between;
    align-items: center;
    padding-right: 9px;
}
.da-head { display: block; width: 22px; overflow: hidden; }
.sort { width: 10px; height: 10px; color: #444; }
.c-clip svg { width: 18px; height: 18px; color: #999; margin-top: 7px; }

.rows { padding-top: 4px; }
.row {
    height: 38px;
    align-items: center;
    border-radius: 5px;
    white-space: nowrap;
    color: #111;
}
.row:nth-child(even) { background-color: #f5f5f5; }
.row.dim { color: #808080; }
.row > span { overflow: hidden; padding-left: 9px; }
.c-name { display: flex; align-items: center; overflow: hidden; }
.c-name b { font-weight: normal; margin-left: 4px; }
.c-name.child { padding-left: 16px; }
.c-name.child b { margin-left: 3px; }
.doc { color: #b0b0b0; }
.stop { width: 22px; height: 22px; flex: none; margin-left: 5px; margin-right: 2px; }
.c-att svg { width: 14px; height: 14px; display: block; }
.row.selected {
    background-color: #3daee9;
    color: #fff;
    --doc-line: #fff;
    --pdf-page: #fff;
    --pdf-fill: #3daee9;
    --pdf-stroke: #fff;
}
.selected .doc, .selected .twisty { color: #fff; }

/* right column */
.details {
    width: 808px;
    flex: none;
    display: flex;
    flex-direction: column;
    border-left: 2px solid #dcdcdc;
    min-height: 0;
    overflow: hidden;
}
.item-title {
    margin: 0;
    height: 75px;
    flex: none;
    padding: 9px 10px 0 12px;
    font-size: 20px;
    line-height: 27px;
    font-weight: 700;
    border-bottom: 1px solid #e0e0e0;
}
.sec-head {
    display: flex;
    align-items: center;
    margin-left: 8px;
    margin-right: 8px;
    flex: none;
    color: #666;
}
.sec-head strong { margin-left: 3px; font-weight: 700; }
.sec-ico { width: 16px; height: 16px; flex: none; color: #6cc58a; }
.sec-chev { width: 12px; height: 12px; margin-left: auto; margin-right: 5px; color: #777; }
.info-head { height: 36px; padding-top: 6px; }
.fields {
    flex: none;
    display: grid;
    grid-template-columns: 150px 1fr;
    column-gap: 13px;
    line-height: 27px;
    color: #232629;
}
.fields label {
    text-align: right;
    color: #757575;
    padding: 3.85px 0;
}
.fields div { padding: 3.85px 0; min-height: 34.7px; }
.fields > :nth-child(-n+2) { padding: 4.85px 0 2.85px; }
.fields .creator { padding: 4.500px 0; }
.type-val { margin-left: -3px; }

.abstract-head {
    margin-top: 1px;
    height: 43px;
    border-top: 1px solid #e0e0e0;
}
.abstract-text {
    margin-left: 7px;
    white-space: nowrap;
    color: #757575;
}
.attach-head {
    height: 43px;
    border-top: 1px solid #e0e0e0;
}
.attach-add { margin-left: auto; font-size: 22px; line-height: 1; color: #666; }
.attach-head .sec-chev { margin-left: 8px; }

.preview {
    position: relative;
    margin: 0 11px 0 10px;
    flex: 1;
    min-height: 0;
    overflow: hidden;
    background-color: #fff;
    border-radius: 8px 8px 0 0;
    padding: 109.500px 0 0 85.500px;
    font-family: "Liberation Mono", monospace;
    font-size: 11.75px;
    line-height: 11.8px;
    color: #222;
}
.crossmark {
    position: absolute;
    top: 93px;
    left: 0;
    width: 33px;
    height: 34px;
    background-color: #e8e8e8;
    border: 1px solid #d0d0d0;
    display: flex;
    flex-direction: column;
    align-items: center;
    font-family: "Noto Sans", sans-serif;
    font-size: 5px;
    line-height: 5px;
    text-align: center;
    color: #444;
}
.preview pre { margin: 0; font: inherit; }
.pdf-cols { display: flex; gap: 50px; margin-top: -1px; }
.pdf-col { width: 282.500px; flex: none; }
.pdf-col p {
    margin: 0;
    height: 11.8px;
    white-space: normal;
    text-align: justify;
    text-align-last: justify;
}
.pdf-col p.plain { text-align: left; text-align-last: left; }
.pdf-col p.indent { padding-left: 35px; word-spacing: 20px; }
.mapped { position: relative; }
.arrow {
    position: absolute;
    top: 2px;
    height: 34px;
    border-left: 1px solid #111;
}
.arrow::after {
    content: "";
    position: absolute;
    left: -3.500px;
    bottom: -2px;
    border: 3px solid transparent;
    border-top: 7px solid #111;
    border-bottom: 0;
}
.a1 { left: 60px; }
.a2 { left: 53px; }
.a3 { left: 216px; }

/* far right strip */
.side-tabs {
    flex: 1;
    display: flex;
    flex-direction: column;
    align-items: center;
    padding-top: 10px;
    border-left: 1px solid #d4d4d4;
}
.side-tabs hr {
    width: 22px;
    margin: 5px 0;
    border: none;
    border-top: 1px solid #ddd;
    flex: none;
}
.st { width: 20px; height: 20px; margin-bottom: 14px; flex: none; }
.st:has(+ hr) { margin-bottom: 5px; }
.side-tabs hr + .st { margin-top: 5px; }
.green { color: #6cc58a; }
```
